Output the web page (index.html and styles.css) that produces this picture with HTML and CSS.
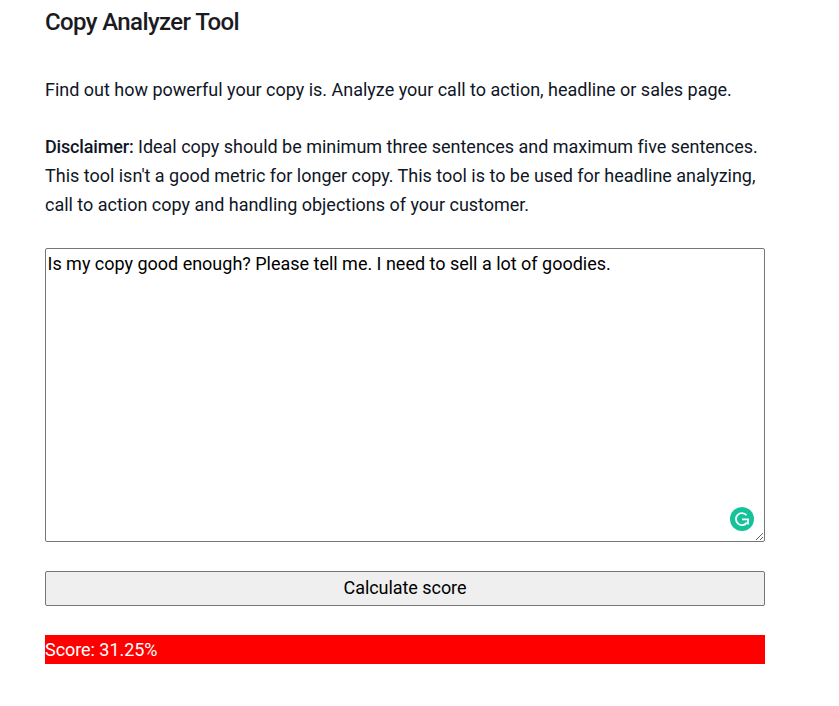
FILE: index.html
```html
<!DOCTYPE html>
<html lang="en">
<head>
  <meta charset="UTF-8" />
  <title>Copy Analyzer Tool</title>
  <link rel="stylesheet" href="styles.css">
</head>
<body>
  <div class="container">
    <h2 class="title">Copy Analyzer Tool</h2>
    <p class="intro">Find out how powerful your copy is. Analyze your call to action, headline or sales page.</p>
    <p class="disclaimer"><strong>Disclaimer:</strong> Ideal copy should be minimum three sentences and maximum five sentences. This tool isn't a good metric for longer copy. This tool is to be used for headline analyzing, call to action copy and handling objections of your customer.</p>
    <div class="input-wrap">
      <textarea class="copy-input">Is my copy good enough? Please tell me. I need to sell a lot of goodies.</textarea>
      <span class="grammarly">
        <svg viewBox="0 0 24 24" width="24" height="24">
          <circle cx="12" cy="12" r="12" fill="#15c39a" />
          <path d="M16.5 8.2A6 6 0 1 0 16.8 15.6" fill="none" stroke="#fff" stroke-width="1.8" />
          <path d="M12 12.3H18V17.6" fill="none" stroke="#fff" stroke-width="1.8" />
        </svg>
      </span>
    </div>
    <button class="calc-btn">Calculate score</button>
    <div class="score">Score: 31.25%</div>
  </div>
</body>
</html>
```

FILE: styles.css
```css
* { box-sizing: border-box; }
body { margin: 0; background: #fff; color: #0f1626; font-family: "Roboto", sans-serif; font-size: 18px; line-height: 29px; letter-spacing: -0.012px; }
.container { width: 720px; margin-left: 45px; }
.title { margin: 8px 0 0; font-size: 24px; font-weight: 500; line-height: 29px; color: #1b1b1f; letter-spacing: -0.62px; }
.intro { margin: 38px 0 0; }
.disclaimer { margin: 28px 0 0; }
.disclaimer strong { font-weight: 500; letter-spacing: -0.16px; }
.input-wrap { position: relative; margin-top: 29px; height: 294px; }
.copy-input { display: block; width: 100%; height: 100%; padding: 2px 2px 2px 1.5px; border: 1px solid #767676; border-radius: 2px; font-family: "Roboto", sans-serif; font-size: 18px; line-height: 26px; letter-spacing: -0.012px; color: #000; background: #fff; }
.grammarly { position: absolute; right: 11px; bottom: 11px; width: 24px; height: 24px; }
.grammarly svg { display: block; }
.calc-btn { display: block; width: 100%; height: 35px; margin-top: 29px; padding: 0 0 2px; border: 1px solid #767676; border-radius: 2px; background: #efefef; font-family: "Roboto", sans-serif; font-size: 18px; letter-spacing: -0.05px; color: #000; }
.score { height: 29px; margin-top: 29px; background: #f00; color: #fff; letter-spacing: -0.05px; }
```
